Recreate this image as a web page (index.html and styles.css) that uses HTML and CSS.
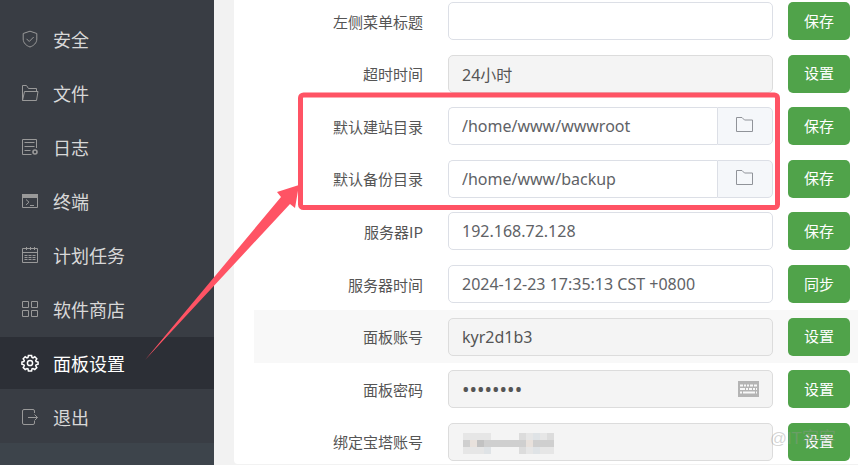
FILE: index.html
```
<!DOCTYPE html>
<html lang="zh-CN">
<head>
    <meta charset="UTF-8">
    <meta name="viewport" content="width=device-width, initial-scale=1.0">
    <title>面板设置</title>
    <link rel="stylesheet" href="styles.css">
</head>
<body>
    <nav class="sidebar">
        <ul class="menu">
            <li><a href="#"><svg viewBox="0 0 18 18"><path d="M9 1.200L15.800 3.500V9c0 4-3 6.600-6.800 8C5.200 15.600 2.200 13 2.200 9V3.500z"/><path d="M5.500 8.800l2.700 2.700 4.500-4.500"/></svg>安全</a></li>
            <li><a href="#"><svg viewBox="0 0 18 18"><path d="M1.500 16.500v-15h4l2 3H15.500v2.500"/><path d="M3.500 7.500H17l-1.500 9H1.500z"/></svg>文件</a></li>
            <li><a href="#"><svg viewBox="0 0 18 18"><path d="M15.500 10V1.500h-14v15h9M3.500 4.500h10M3.500 8.500h10M3.500 12.500h6"/><circle cx="14" cy="14" r="2" stroke-width="1.600"/></svg>日志</a></li>
            <li><a href="#"><svg viewBox="0 0 18 18"><path d="M1.500 2.500h15v13h-15z"/><path class="solid" d="M1 2h16v4H1z"/><path d="M5 7.500l3 2.700-3 2.700M9 13.500h4"/></svg>终端</a></li>
            <li><a href="#"><svg viewBox="0 0 18 18"><path d="M1.500 2.500h15v14h-15zM1.500 6.500h15M5.500 1v3M9.500 1v3M13.500 1v3"/><path d="M3.500 9.500h11M3.500 11.500h11M3.500 13.500h11" stroke-dasharray="3 1"/></svg>计划任务</a></li>
            <li><a href="#"><svg viewBox="0 0 18 18"><path d="M1.500 1.500h6v6h-6zM10.500 1.500h6v6h-6zM1.500 10.500h6v6h-6zM10.500 10.500h6v6h-6z"/></svg>软件商店</a></li>
            <li><a href="#" class="active"><svg viewBox="0 0 18 18"><path d="M7.400 1.500h3.200l.4 2 1 .4 1.800-1.100 2 2-1.100 1.800.4 1 2 .4v2.200l-2 .6-.4 1 1.100 1.800-2 2-1.800-1.100-1 .4-.4 2H7.400l-.4-2-1-.4-1.800 1.100-2-2 1.100-1.800-.4-1-2-.6V8l2-.4.4-1-1.100-1.800 2-2L6 3.900l1-.4z"/><circle cx="9" cy="9" r="2.600"/></svg>面板设置</a></li>
            <li><a href="#"><svg viewBox="0 0 18 18"><path d="M13.500 5V3q0-1.500-1.500-1.500H3Q1.500 1.500 1.500 3v12q0 1.500 1.500 1.500h9q1.500 0 1.500-1.500v-2M7 9.500h9.500M13.500 6.500l3 3-3 3"/></svg>退出</a></li>
        </ul>
    </nav>

    <main class="panel">
        <form class="settings">
            <div class="row">
                <label for="menuTitle">左侧菜单标题</label>
                <div class="field"><input type="text" id="menuTitle"></div>
                <button type="button">保存</button>
            </div>
            <div class="row">
                <label for="timeout">超时时间</label>
                <div class="field"><input type="text" id="timeout" value="24小时" readonly class="locked"></div>
                <button type="button">设置</button>
            </div>
            <div class="row">
                <label for="sitePath">默认建站目录</label>
                <div class="field">
                    <input type="text" id="sitePath" value="/home/www/wwwroot">
                    <button type="button" class="browse" aria-label="选择目录"><svg viewBox="0 0 20 18"><path d="M1.500 1.500h5.500l2.500 2.500h8v11.500h-16z"/></svg></button>
                </div>
                <button type="button">保存</button>
            </div>
            <div class="row">
                <label for="backupPath">默认备份目录</label>
                <div class="field">
                    <input type="text" id="backupPath" value="/home/www/backup">
                    <button type="button" class="browse" aria-label="选择目录"><svg viewBox="0 0 20 18"><path d="M1.500 1.500h5.500l2.500 2.500h8v11.500h-16z"/></svg></button>
                </div>
                <button type="button">保存</button>
            </div>
            <div class="row">
                <label for="serverIp">服务器IP</label>
                <div class="field"><input type="text" id="serverIp" value="192.168.72.128"></div>
                <button type="button">保存</button>
            </div>
            <div class="row">
                <label for="serverTime">服务器时间</label>
                <div class="field"><input type="text" id="serverTime" value="2024-12-23 17:35:13 CST +0800"></div>
                <button type="button">同步</button>
            </div>
            <div class="row current">
                <label for="account">面板账号</label>
                <div class="field"><input type="text" id="account" value="kyr2d1b3" readonly class="locked"></div>
                <button type="button">设置</button>
            </div>
            <div class="row">
                <label for="password">面板密码</label>
                <div class="field">
                    <input type="password" id="password" value="12345678" readonly class="locked">
                    <svg class="keyboard" viewBox="0 0 21 16"><path class="board" d="M0 0h21v16H0z"/><path d="M2 4.500h17" stroke-dasharray="3 1 2 1 2 1 3 1 4"/><path d="M2 8h17" stroke-dasharray="5 1 2 1 3 1 2 1 2"/><path d="M2 11.500h17" stroke-dasharray="2 1 12 1 2"/></svg>
                </div>
                <button type="button">设置</button>
            </div>
            <div class="row">
                <label for="bindAccount">绑定宝塔账号</label>
                <div class="field">
                    <input type="text" id="bindAccount" readonly class="locked">
                    <svg class="mosaic" viewBox="0 0 91 21"><path fill="#e6e6e6" d="M0 0h28v21H0zM56 0h35v21H56z"/><path fill="#dcdcdc" d="M56 0h7v21h-7zM84 0h7v7h-7z"/><path fill="#dfe3e6" d="M21 7h7v14h-7zM70 0h7v21h-7z"/><path fill="#cfcfcf" d="M0 7h91v7H0z"/><path fill="#e8e1dc" d="M7 7h7v7H7zM63 7h7v7h-7z"/><path fill="#c2c2c2" d="M14 7h7v7h-7z"/></svg>
                </div>
                <button type="button">设置</button>
            </div>
        </form>
    </main>

    <!-- 标注层 -->
    <svg class="marks" width="858" height="465" viewBox="0 0 858 465">
        <rect x="300.500" y="95" width="477" height="112.500" rx="3"/>
        <path d="M145 360L281 197L277 192L299 185L295 208L290 204z"/>
    </svg>
    <span class="watermark">@IT客客</span>
</body>
</html>
```
FILE: styles.css
```
* {
    box-sizing: border-box;
}

body {
    margin: 0;
    height: 100vh;
    display: flex;
    overflow: hidden;
    position: relative;
    background: #f2f2f2;
    color: #555;
    font-family: "Noto Sans", "Noto Sans CJK SC", sans-serif;
    font-size: 15px;
}

.sidebar {
    width: 214px;
    flex-shrink: 0;
    background: #3d444b;
}

.menu {
    list-style: none;
    margin: 0;
    padding: 13px 0 0;
    display: flex;
    flex-direction: column;
    gap: 2px;
    background: #393d44;
}

.menu a {
    display: flex;
    align-items: center;
    gap: 14px;
    height: 52px;
    padding-left: 21px;
    color: #d8d8d8;
    font-family: "Noto Sans CJK SC", sans-serif;
    font-size: 18px;
    text-decoration: none;
}

.menu svg {
    width: 18px;
    height: 18px;
    fill: none;
    stroke: #999;
}

.menu .solid {
    fill: #999;
    stroke: none;
}

.menu a.active {
    background: #2c2f36;
    color: #fff;
}

.menu .active svg {
    stroke: #fff;
    stroke-width: 1.5;
}

.panel {
    flex: 1;
    margin: 0 0 1px 20px;
    padding-left: 20px;
    background: #fff;
    border-radius: 0 0 0 4px;
    overflow: hidden;
}

.settings {
    display: grid;
    grid-auto-rows: 1fr;
    height: calc(100vh + 8px);
    margin-top: -5px;
}

.row {
    display: flex;
    align-items: center;
    padding-right: 8px;
}

.row.current {
    background: #f8f8f8;
}

.row label {
    width: 169px;
    margin-right: 25px;
    text-align: right;
    font-family: "Noto Sans CJK SC", sans-serif;
}

.field {
    flex: 1;
    display: flex;
    position: relative;
    margin-right: 15px;
}

.field input {
    flex: 1;
    min-width: 0;
    height: 38px;
    padding: 0 13px;
    border: 1px solid #dcdfe6;
    border-radius: 5px;
    background: #fff;
    color: #606266;
    font: inherit;
    font-size: 16px;
}

.field input[type="password"] {
    font-size: 20px;
}

.field .locked {
    background: #f4f4f4;
    border-color: #dcdcdc;
    color: #555;
}

.row button {
    width: 62px;
    height: 38px;
    padding: 0 0 2px;
    border: 0;
    border-radius: 5px;
    background: #50a34a;
    color: #fff;
    font-family: "Noto Sans CJK SC", sans-serif;
    font-size: 15px;
    cursor: pointer;
}

.row .field:has(.browse) input {
    border-right: 0;
    border-radius: 5px 0 0 5px;
}

.row .browse {
    width: 56px;
    display: flex;
    align-items: center;
    justify-content: center;
    border: 1px solid #dcdfe6;
    border-radius: 0 5px 5px 0;
    background: #f5f7fa;
}

.browse svg {
    width: 20px;
    height: 18px;
    fill: none;
    stroke: #909399;
}

.keyboard {
    position: absolute;
    top: 11px;
    right: 14px;
    width: 21px;
    height: 16px;
    fill: none;
    stroke: #f8f8f8;
    stroke-width: 2;
}

.keyboard .board {
    fill: #b4b4b4;
    stroke: none;
}

.mosaic {
    position: absolute;
    top: 10px;
    left: 15px;
    width: 91px;
    height: 21px;
}

.marks {
    position: absolute;
    top: 0;
    left: 0;
    pointer-events: none;
}

.marks rect {
    fill: none;
    stroke: #ff5364;
    stroke-width: 5;
}

.marks path {
    fill: #ff5364;
}

.watermark {
    position: absolute;
    right: 22px;
    bottom: 16px;
    color: rgba(150, 150, 150, 0.4);
    font-family: "Liberation Sans", "Noto Sans CJK SC", sans-serif;
    font-size: 17px;
    pointer-events: none;
}
```
